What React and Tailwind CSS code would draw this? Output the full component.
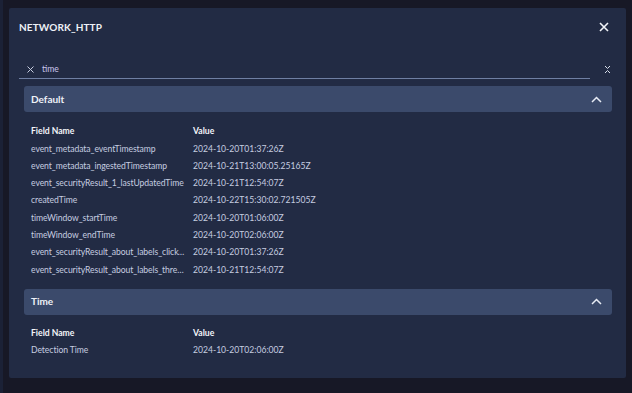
import React from "react";

const defaultRows = [
  ["event_metadata_eventTimestamp", "2024-10-20T01:37:26Z"],
  ["event_metadata_ingestedTimestamp", "2024-10-21T13:00:05.25165Z"],
  ["event_securityResult_1_lastUpdatedTime", "2024-10-21T12:54:07Z"],
  ["createdTime", "2024-10-22T15:30:02.721505Z"],
  ["timeWindow_startTime", "2024-10-20T01:06:00Z"],
  ["timeWindow_endTime", "2024-10-20T02:06:00Z"],
  ["event_securityResult_about_labels_clickThroughTime", "2024-10-20T01:37:26Z"],
  ["event_securityResult_about_labels_threatTime", "2024-10-21T12:54:07Z"],
];

const timeRows = [["Detection Time", "2024-10-20T02:06:00Z"]];

function ChevronUp() {
  return (
    <svg width="11" height="7" viewBox="0 0 11 7" fill="none">
      <path d="M1 6L5.5 1.5L10 6" stroke="#e8ecf5" strokeWidth="1.5" />
    </svg>
  );
}

function Section({ title, rows, bodyClass }) {
  return (
    <div className="flex flex-col">
      <div className="ml-[15px] mr-[14px] h-[26px] rounded-[3px] bg-[#3b4a6b] flex items-center justify-between pl-[7px] pr-[10px]">
        <span className="text-[10px] font-bold text-[#eef1f7]">{title}</span>
        <ChevronUp />
      </div>
      <div className={"pl-[22px] pr-[20px] " + bodyClass}>
        <div className="flex h-[17.3px] items-center text-[#f3f5fa] font-bold">
          <div className="w-[162px] shrink-0 overflow-hidden whitespace-nowrap">Field Name</div>
          <div>Value</div>
        </div>
        {rows.map(([k, v]) => (
          <div key={k} className="flex h-[17.3px] items-center text-[#c6cde0]">
            <div className="w-[162px] shrink-0">
              <div className="max-w-[155px] truncate tracking-[-0.06px]">{k}</div>
            </div>
            <div className="whitespace-nowrap">{v}</div>
          </div>
        ))}
      </div>
    </div>
  );
}

export default function App() {
  return (
    <div
      className="w-[632px] h-[393px] bg-[#171826] flex overflow-hidden text-[8.6px]"
      style={{ fontFamily: "Lato, 'Noto Sans', sans-serif" }}
    >
      <div className="w-[3px] h-full bg-[#1b2136]" />
      <div className="ml-[6px] mt-[8px] w-[617px] h-[370px] bg-[#222b44] rounded-[2px] flex flex-col">
        <div className="h-[38px] flex items-center justify-between pl-[10px] pr-[17px]">
          <span className="text-[10px] font-bold text-[#eef1f7] tracking-[0.1px]">NETWORK_HTTP</span>
          <svg width="10" height="10" viewBox="0 0 10 10">
            <path d="M1 1L9 9M9 1L1 9" stroke="#f2f4f8" strokeWidth="1.6" />
          </svg>
        </div>
        <div className="mt-[13px] flex items-end pl-[10px] pr-[15px]">
          <div className="w-[571px] h-[20px] border-b border-[#6f7fa3] flex items-center pl-[8px] pt-[1px]">
            <svg width="7" height="7" viewBox="0 0 7 7">
              <path d="M0.5 0.5L6.5 6.5M6.5 0.5L0.5 6.5" stroke="#c6cde0" strokeWidth="1" />
            </svg>
            <span className="ml-[8px] text-[#c9c4ec]">time</span>
          </div>
          <div className="flex-1 flex justify-end h-[20px] items-center pt-[1px]">
            <svg width="7" height="9" viewBox="0 0 7 9" fill="none">
              <path d="M1 1L3.5 3.5L6 1M1 8L3.5 5.5L6 8" stroke="#d8deea" strokeWidth="1" />
            </svg>
          </div>
        </div>
        <div className="mt-[7px]">
          <Section title="Default" rows={defaultRows} bodyClass="pt-[11px] pb-[10px]" />
        </div>
        <Section title="Time" rows={timeRows} bodyClass="pt-[10px]" />
      </div>
    </div>
  );
}
